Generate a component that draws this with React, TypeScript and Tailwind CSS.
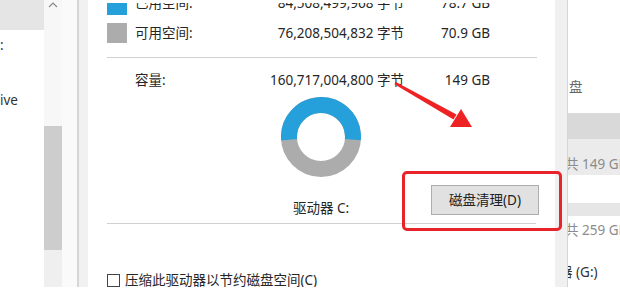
import React from "react";

const C = 2 * Math.PI * 32;

function Cols({ label, bytes, gb }: { label: string; bytes: string; gb: string }) {
  return (
    <>
      <div className="ml-[8px] w-[132px]">{label}</div>
      <div className="w-[137px] text-right">{bytes}</div>
      <div className="w-[86px] text-right">{gb}</div>
    </>
  );
}

export default function App() {
  return (
    <div className="w-[620px] h-[306px] relative overflow-hidden bg-white text-[13.5px] text-[#262626] font-['Noto_Sans','Noto_Sans_CJK_SC',sans-serif]">
      <div className="flex h-[287px] overflow-hidden">
        {/* left nav pane */}
        <div className="w-[44px] flex flex-col bg-white overflow-hidden whitespace-nowrap">
          <div className="h-[30px] bg-[#e5e5e5] shrink-0" />
          <div className="mt-[8px] h-[14px] leading-[14px] text-[#333]">:</div>
          <div className="mt-[41px] h-[14px] leading-[14px] text-[#333]">ive</div>
        </div>
        {/* scrollbar */}
        <div className="w-[18px] flex flex-col">
          <div className="h-[126px] bg-[#f7f7f7] shrink-0">
            <svg width="18" height="10" viewBox="0 0 18 10">
              <path d="M5 7 L9 3 L13 7" stroke="#8a8a8a" strokeWidth="1.2" fill="none" />
            </svg>
          </div>
          <div className="h-[124px] bg-[#cdcdcd] shrink-0" />
          <div className="flex-1 bg-[#efefef]" />
        </div>
        <div className="w-[15px] bg-[#fafafa]" />
        <div className="w-[2px] bg-[#d6d6d6]" />
        <div className="w-[9px] bg-[#f1f1f1]" />
        {/* dialog */}
        <div className="w-[467px] bg-white pt-[3px] flex flex-col shrink-0">
          <div className="flex-1 flex flex-col overflow-hidden pl-[19px]">
            <div className="mt-[-15px] h-[31px] flex items-center whitespace-nowrap shrink-0">
              <div className="self-start mt-[7px] w-[20px] h-[20px] bg-[#26a0da]" />
              <Cols label="已用空间:" bytes="84,508,499,968 字节" gb="78.7 GB" />
            </div>
            <div className="h-[28px] flex items-center whitespace-nowrap shrink-0">
              <div className="w-[20px] h-[20px] bg-[#acacac]" />
              <Cols label="可用空间:" bytes="76,208,504,832 字节" gb="70.9 GB" />
            </div>
            <div className="mt-[10px] h-px w-[430px] bg-[#d0d0d0] shrink-0" />
            <div className="mt-[8px] h-[28px] flex items-center whitespace-nowrap shrink-0">
              <div className="w-[20px]" />
              <Cols label="容量:" bytes="160,717,004,800 字节" gb="149 GB" />
            </div>
            <div className="flex h-[129px] shrink-0">
              <div className="ml-[154px] w-[120px] flex flex-col items-center">
                <svg className="mt-[3px]" width="80" height="80" viewBox="0 0 80 80">
                  <circle cx="40" cy="40" r="32" fill="none" stroke="#acacac" strokeWidth="16" />
                  <circle
                    cx="40"
                    cy="40"
                    r="32"
                    fill="none"
                    stroke="#26a0da"
                    strokeWidth="16"
                    strokeDasharray={`${0.526 * C} ${C}`}
                    transform="rotate(175 40 40)"
                  />
                </svg>
                <div className="mt-[21px] h-[20px] leading-[20px] whitespace-nowrap">驱动器 C:</div>
              </div>
              <div className="ml-[50px] mt-[91px] w-[108px] h-[30px] border border-[#adadad] bg-[#e1e1e1] flex items-center justify-center whitespace-nowrap text-[#222]">
                磁盘清理(D)
              </div>
            </div>
            <div className="h-px w-[429px] bg-[#d0d0d0] shrink-0" />
            <div className="mt-[46px] h-[20px] flex items-center whitespace-nowrap shrink-0">
              <div className="w-[13px] h-[13px] border border-[#444] bg-white" />
              <div className="ml-[5px]">压缩此驱动器以节约磁盘空间(C)</div>
            </div>
          </div>
        </div>
        <div className="w-[12px] bg-[#f0f0f0]" />
        <div className="w-[1px] bg-[#d5d5d5]" />
        {/* right pane */}
        <div className="w-[52px] flex flex-col overflow-hidden whitespace-nowrap text-[13.5px]">
          <div className="h-[80px] shrink-0" />
          <div className="h-[14px] leading-[14px] pl-[1px] text-[#666]">盘</div>
          <div className="mt-[19px] h-[26px] bg-[#d9d9d9] shrink-0" />
          <div className="h-[36px] bg-[#ebebeb] shrink-0 pt-[18px]">
            <div className="h-[14px] leading-[14px] ml-[-3px] text-[#8c8c8c]">共 149 GB</div>
          </div>
          <div className="h-[28px] shrink-0" />
          <div className="h-[13px] bg-[#e6e6e6] shrink-0" />
          <div className="mt-[7px] h-[14px] leading-[14px] ml-[-3px] text-[#8c8c8c]">共 259 GB</div>
          <div className="mt-[28px] h-[14px] leading-[14px] ml-[-9px] text-[#333]">器 (G:)</div>
        </div>
      </div>
      {/* annotations */}
      <div className="absolute left-[402px] top-[171px] w-[160px] h-[60px] border-[3px] border-[#e8242a] rounded-[5px]" />
      <svg className="absolute left-0 top-0 pointer-events-none" width="620" height="306" viewBox="0 0 620 306">
        <polygon points="395.5,81.8 456.5,114.5 453.5,119.5 394.5,84.2" fill="#ee2222" />
        <polygon points="450,127 461,109 472,127" fill="#ee2222" />
      </svg>
    </div>
  );
}
